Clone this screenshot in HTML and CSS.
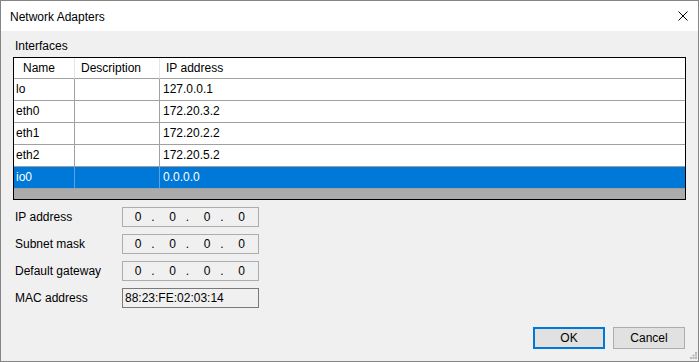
FILE: index.html
```html
<!DOCTYPE html>
<html>
<head>
  <meta charset="utf-8">
  <title>Network Adapters</title>
  <link rel="stylesheet" href="styles.css">
</head>
<body>
<div class="window">
  <div class="titlebar">
    <div class="title">Network Adapters</div>
    <svg class="close" width="10" height="10" viewBox="0 0 10 10">
      <path d="M0.5 0.5 L9.5 9.5 M9.5 0.5 L0.5 9.5" stroke="#000" stroke-width="1" fill="none"/>
    </svg>
  </div>
  <div class="content">
    <div class="caption">Interfaces</div>
    <div class="list">
      <div class="row header">
        <div class="cell first">Name</div>
        <div class="cell">Description</div>
        <div class="cell">IP address</div>
      </div>
      <div class="row">
        <div class="cell">lo</div>
        <div class="cell"></div>
        <div class="cell ip">127.0.0.1</div>
      </div>
      <div class="row">
        <div class="cell">eth0</div>
        <div class="cell"></div>
        <div class="cell ip">172.20.3.2</div>
      </div>
      <div class="row">
        <div class="cell">eth1</div>
        <div class="cell"></div>
        <div class="cell ip">172.20.2.2</div>
      </div>
      <div class="row">
        <div class="cell">eth2</div>
        <div class="cell"></div>
        <div class="cell ip">172.20.5.2</div>
      </div>
      <div class="row selected">
        <div class="cell">io0</div>
        <div class="cell"></div>
        <div class="cell ip">0.0.0.0</div>
      </div>
    </div>

    <div class="fields">
      <div class="label">IP address</div>
      <div class="box ipbox"><span class="octet">0</span><span class="dot">.</span><span class="octet">0</span><span class="dot">.</span><span class="octet">0</span><span class="dot">.</span><span class="octet">0</span></div>
      <div class="label">Subnet mask</div>
      <div class="box ipbox"><span class="octet">0</span><span class="dot">.</span><span class="octet">0</span><span class="dot">.</span><span class="octet">0</span><span class="dot">.</span><span class="octet">0</span></div>
      <div class="label">Default gateway</div>
      <div class="box ipbox"><span class="octet">0</span><span class="dot">.</span><span class="octet">0</span><span class="dot">.</span><span class="octet">0</span><span class="dot">.</span><span class="octet">0</span></div>
      <div class="label">MAC address</div>
      <div class="box macbox">88:23:FE:02:03:14</div>
    </div>

    <div class="buttons">
      <div class="button default">OK</div>
      <div class="button">Cancel</div>
    </div>
  </div>
  <svg class="grip" width="7" height="7" viewBox="0 0 7 7">
    <rect x="5" y="0" width="2" height="2" fill="#b8b8b8"/>
    <rect x="2.5" y="2.5" width="2" height="2" fill="#b8b8b8"/>
    <rect x="5" y="2.5" width="2" height="2" fill="#b8b8b8"/>
    <rect x="0" y="5" width="2" height="2" fill="#b8b8b8"/>
    <rect x="2.5" y="5" width="2" height="2" fill="#b8b8b8"/>
    <rect x="5" y="5" width="2" height="2" fill="#b8b8b8"/>
  </svg>
</div>
</body>
</html>
```

FILE: styles.css
```css
body{
  margin: 0;
  font-family: "Liberation Sans", Arial, sans-serif;
  font-size: 12px;
  color: #000;
}
.window{
  position: relative;
  width: 699px;
  height: 362px;
  box-sizing: border-box;
  border: 1px solid #858585;
  background-color: #f0f0f0;
}
.titlebar{
  height: 30px;
  background-color: #fff;
  display: flex;
  align-items: center;
  justify-content: space-between;
  padding-left: 9px;
  padding-right: 10px;
}
.title{
  padding-top: 1px;
}
.close{
  display: block;
  margin-top: -1px;
}
.content{
  padding: 8px 12px 0 12px;
}
.caption{
  height: 15px;
  line-height: 15px;
  padding-left: 2px;
}
.list{
  margin-top: 3px;
  height: 143px;
  box-sizing: border-box;
  border: 1px solid #000;
  background-color: #ababab;
}
.row{
  display: grid;
  grid-template-columns: 61px 85px 1fr;
  height: 22px;
  background-color: #fff;
}
.row .cell{
  border-right: 1px solid #a0a0a0;
  border-bottom: 1px solid #a0a0a0;
  line-height: 21px;
  padding-left: 2px;
  white-space: nowrap;
}
.row .cell:last-child{
  border-right: none;
}
.row .cell.ip{
  padding-left: 3px;
}
.header{
  height: 21px;
}
.header .cell{
  line-height: 20px;
  padding-left: 6px;
  border-right-color: #e5e5e5;
}
.header .cell.first{
  padding-left: 9px;
}
.selected{
  background-color: #0078d7;
  color: #fff;
}
.selected .cell{
  border-right-color: #5aa2e2;
}

.fields{
  display: grid;
  grid-template-columns: 107px 137px;
  grid-auto-rows: 20px;
  row-gap: 7px;
  margin-top: 7px;
  padding-left: 2px;
}
.label{
  line-height: 20px;
}
.box{
  box-sizing: border-box;
  border: 1px solid #adadad;
  background-color: #f0f0f0;
  line-height: 18px;
}
.ipbox{
  display: flex;
  padding-left: 7px;
}
.octet{
  width: 11.5px;
  text-align: right;
}
.dot{
  width: 23px;
  text-align: center;
}
.macbox{
  border-color: #7a7a7a;
  padding-left: 2px;
}

.buttons{
  display: flex;
  justify-content: flex-end;
  gap: 8px;
  margin-top: 19px;
  padding-right: 1px;
}
.button{
  width: 72px;
  height: 22px;
  box-sizing: border-box;
  border: 1px solid #adadad;
  background-color: #e1e1e1;
  text-align: center;
  line-height: 20px;
}
.button.default{
  border: 2px solid #0078d7;
  line-height: 18px;
}
.grip{
  position: absolute;
  right: 1px;
  bottom: 2px;
}
```
